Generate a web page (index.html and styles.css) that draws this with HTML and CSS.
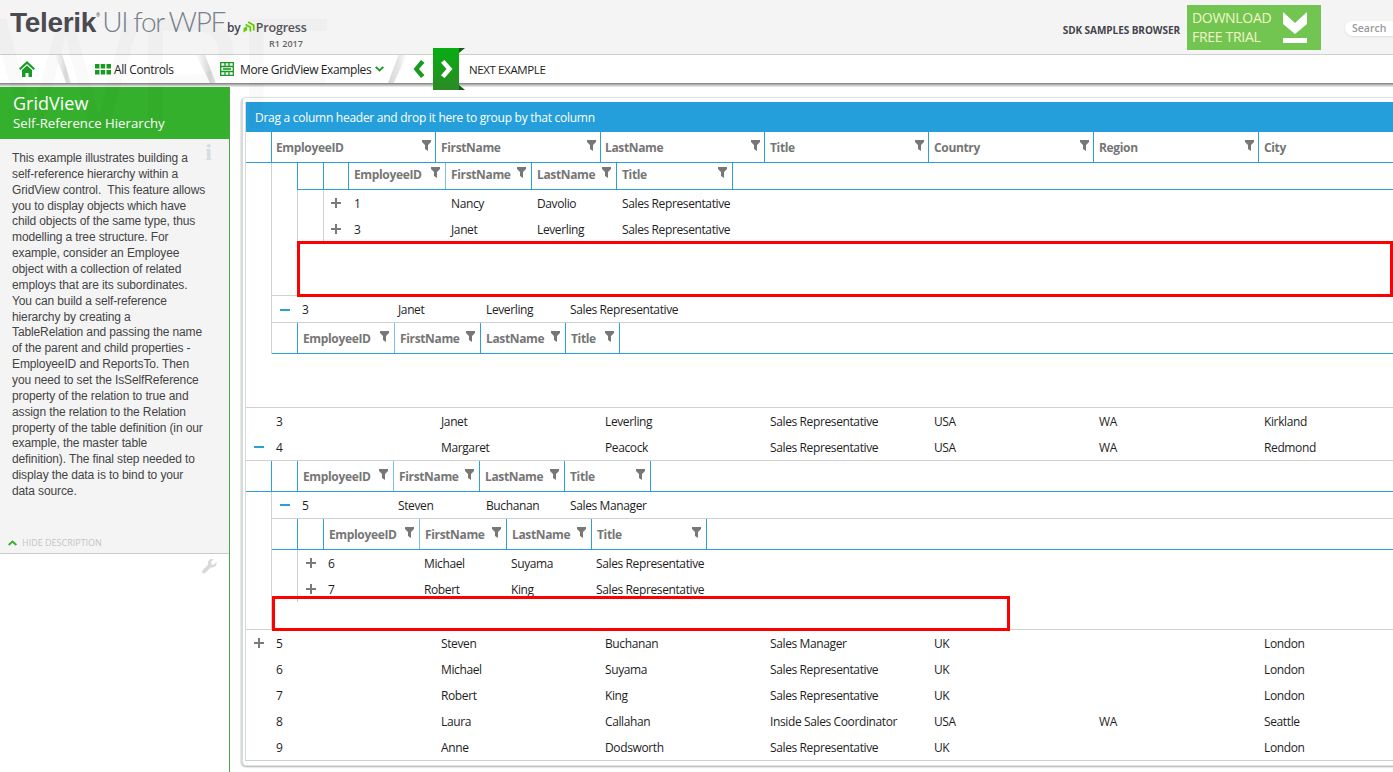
FILE: index.html
```html
<!DOCTYPE html>
<html lang="en">
<head>
<meta charset="utf-8">
<title>Telerik UI for WPF - GridView Self-Reference Hierarchy</title>
<link rel="stylesheet" href="styles.css">
</head>
<body>
<svg class="defs" width="0" height="0" aria-hidden="true">
  <symbol id="funnel" viewBox="0 0 9 11"><path d="M0 0h9v2L6 5v6L3 9V5L0 2z"/></symbol>
  <symbol id="plus" viewBox="0 0 10 10"><path d="M4 0h2v4h4v2H6v4H4V6H0V4h4z"/></symbol>
  <symbol id="minus" viewBox="0 0 10 10"><path d="M0 4h10v2H0z"/></symbol>
</svg>
<div class="page">
  <div class="watermark">WPF</div>
  <header class="top">
    <div class="logo">
      <div class="logo-line">
        <span class="telerik">Telerik</span><span class="reg">®</span><span class="ui">UI for WPF</span>
        <span class="by">by</span>
        <svg class="pg" viewBox="0 0 12 12"><path class="pg-core" d="M.5 11.500V7.200L4.200 5v4.300z"/><path class="pg-arc" d="M2.600 3.400L7.400 6.200V10.500M5 1L10.800 4.300V9.500"/></svg>
        <span class="prog">Progress</span>
      </div>
      <div class="ver">R1 2017</div>
    </div>
    <div class="top-right">
      <span class="sdk">SDK SAMPLES BROWSER</span>
      <div class="trial">
        <div class="trial-text">DOWNLOAD<br>FREE TRIAL</div>
        <svg class="dl" viewBox="0 0 24 32"><path fill="#fff" d="M0 0l12 11L24 0v12L12 22 0 12zM0 26h24v5H0z"/></svg>
      </div>
      <div class="search">Search</div>
    </div>
  </header>
  <nav class="nav">
    <svg class="home" viewBox="0 0 16 16"><path d="M8 0l8 7.500-1.400 1.400L8 3 1.400 8.900 0 7.500z"/><path d="M3 9l5-4.600L13 9v7H9.500v-4h-3v4H3z"/></svg>
    <i class="sep sep1"></i>
    <svg class="dots" viewBox="0 0 16 11"><path d="M0 0h4.500v4.500H0zM5.700 0h4.500v4.500H5.700zM11.500 0H16v4.500h-4.500zM0 6h4.500v4.500H0zM5.700 6h4.500v4.500H5.700zM11.500 6H16v4.500h-4.500z"/></svg>
    <span class="nav-text t-all">All Controls</span>
    <i class="sep sep2"></i>
    <svg class="tbl" viewBox="0 0 14 14"><path fill="none" stroke="#1a9a23" stroke-width="1.300" d="M.7.700h12.600v12.600H.7zM.7 4.500h12.600M.7 9.500h12.600M5 .7v3.800M9 .7v3.800M5 9.500v3.800M9 9.500v3.800"/><path fill="#1a9a23" d="M3 6.200h8v1.600H3z"/></svg>
    <span class="nav-text t-more">More GridView Examples</span>
    <svg class="chev" viewBox="0 0 10 6"><path d="M1.500 0L5 3.200 8.500 0 10 1.400 5 6 0 1.400z"/></svg>
    <i class="sep sep3"></i>
    <svg class="prev" viewBox="0 0 12 18"><path d="M8 0l3.500 2.800L6 9l5.500 6.200L8 18 .5 9z"/></svg>
    <div class="next-btn">
      <svg viewBox="0 0 13 18"><path d="M4.500 0L12.500 9l-8 9L1 15.200 6.500 9 1 2.800z"/></svg>
    </div>
    <span class="nav-text t-next">NEXT EXAMPLE</span>
  </nav>
  <div class="shade"></div>
  <main class="main">
    <aside class="side">
      <div class="side-head">
        <div class="side-title">GridView</div>
        <div class="side-sub">Self-Reference Hierarchy</div>
      </div>
      <div class="desc">
        <span class="info">i</span>
        <p>This example illustrates building a<br>self-reference hierarchy within a<br>GridView control.&nbsp; This feature allows<br>you to display objects which have<br>child objects of the same type, thus<br>modelling a tree structure. For<br>example, consider an Employee<br>object with a collection of related<br>employs that are its subordinates.<br>You can build a self-reference<br>hierarchy by creating a<br>TableRelation and passing the name<br>of the parent and child properties -<br>EmployeeID and ReportsTo. Then<br>you need to set the IsSelfReference<br>property of the relation to true and<br>assign the relation to the Relation<br>property of the table definition (in our<br>example, the master table<br>definition). The final step needed to<br>display the data is to bind to your<br>data source.</p>
        <div class="hide"><svg viewBox="0 0 10 6"><path d="M5 0l5 4.500L8.500 6 5 2.800 1.500 6 0 4.500z"/></svg><span>HIDE DESCRIPTION</span></div>
      </div>
      <div class="tools">
        <svg class="wrench" viewBox="0 0 16 16"><path d="M15.500 3.200L12.600 6 10 5.500 9.500 3 12.400.4C10.300-.4 8.300.2 7.200 1.500 6.100 2.800 6 4.500 6.500 6L.6 12c-.8.800-.8 2 0 2.900.8.800 2.100.8 2.900 0l6-6c1.500.5 3.200.3 4.500-.9 1.300-1.200 1.900-3.100 1.500-4.800z"/></svg>
      </div>
    </aside>
    <section class="content">
      <div class="card">
        <div class="grid">
          <div class="group-bar">Drag a column header and drop it here to group by that column</div>

          <div class="head main-cols">
            <div></div>
            <div class="hc id"><span>EmployeeID</span><svg class="fi"><use href="#funnel"/></svg></div>
            <div class="hc"><span>FirstName</span><svg class="fi"><use href="#funnel"/></svg></div>
            <div class="hc id"><span>LastName</span><svg class="fi"><use href="#funnel"/></svg></div>
            <div class="hc"><span>Title</span><svg class="fi"><use href="#funnel"/></svg></div>
            <div class="hc"><span>Country</span><svg class="fi"><use href="#funnel"/></svg></div>
            <div class="hc"><span>Region</span><svg class="fi"><use href="#funnel"/></svg></div>
            <div class="hc"><span>City</span></div>
          </div>

          <div class="detail">
            <div class="sub-a">
              <div class="head short a-cols">
                <div class="hc"></div>
                <div class="hc"></div>
                <div class="hc"><span>EmployeeID</span><svg class="fi"><use href="#funnel"/></svg></div>
                <div class="hc lt"><span>FirstName</span><svg class="fi"><use href="#funnel"/></svg></div>
                <div class="hc"><span>LastName</span><svg class="fi"><use href="#funnel"/></svg></div>
                <div class="hc"><span>Title</span><svg class="fi"><use href="#funnel"/></svg></div>
                <div class="hc"></div>
              </div>
              <div class="row a-cols">
                <div class="rule"></div>
                <div class="rule tg"><svg class="ic plus"><use href="#plus"/></svg></div>
                <div class="c">1</div><div class="c">Nancy</div><div class="c">Davolio</div><div class="c">Sales Representative</div>
              </div>
              <div class="row a-cols">
                <div class="rule"></div>
                <div class="rule tg"><svg class="ic plus"><use href="#plus"/></svg></div>
                <div class="c">3</div><div class="c">Janet</div><div class="c">Leverling</div><div class="c">Sales Representative</div>
              </div>
            </div>
            <div class="row thin br-cols line">
              <div class="tg"><svg class="ic minus"><use href="#minus"/></svg></div>
              <div class="c5">3</div><div class="c5">Janet</div><div class="c5">Leverling</div><div class="c5">Sales Representative</div>
            </div>
            <div class="head b-cols">
              <div></div>
              <div class="hc"><span>EmployeeID</span><svg class="fi"><use href="#funnel"/></svg></div>
              <div class="hc lt"><span>FirstName</span><svg class="fi"><use href="#funnel"/></svg></div>
              <div class="hc"><span>LastName</span><svg class="fi"><use href="#funnel"/></svg></div>
              <div class="hc"><span>Title</span><svg class="fi"><use href="#funnel"/></svg></div>
              <div class="hc"></div>
            </div>
          </div>
          <div class="gap"></div>

          <div class="row main-cols">
            <div class="tg"></div><div class="c id">3</div><div class="c">Janet</div><div class="c id">Leverling</div><div class="c">Sales Representative</div><div class="c">USA</div><div class="c">WA</div><div class="c">Kirkland</div>
          </div>
          <div class="row main-cols line">
            <div class="tg"><svg class="ic minus"><use href="#minus"/></svg></div><div class="c id">4</div><div class="c">Margaret</div><div class="c id">Peacock</div><div class="c">Sales Representative</div><div class="c">USA</div><div class="c">WA</div><div class="c">Redmond</div>
          </div>
          <div class="head c-cols">
            <div></div>
            <div class="hc"></div>
            <div class="hc"><span>EmployeeID</span><svg class="fi"><use href="#funnel"/></svg></div>
            <div class="hc lt"><span>FirstName</span><svg class="fi"><use href="#funnel"/></svg></div>
            <div class="hc"><span>LastName</span><svg class="fi"><use href="#funnel"/></svg></div>
            <div class="hc"><span>Title</span><svg class="fi"><use href="#funnel"/></svg></div>
            <div class="hc"></div>
          </div>

          <div class="section-end">
            <div class="detail tall">
              <div class="row br-cols line">
                <div class="tg"><svg class="ic minus"><use href="#minus"/></svg></div>
                <div class="c5">5</div><div class="c5">Steven</div><div class="c5">Buchanan</div><div class="c5">Sales Manager</div>
              </div>
              <div class="head d-cols">
                <div></div>
                <div class="hc"></div>
                <div class="hc"><span>EmployeeID</span><svg class="fi"><use href="#funnel"/></svg></div>
                <div class="hc lt"><span>FirstName</span><svg class="fi"><use href="#funnel"/></svg></div>
                <div class="hc"><span>LastName</span><svg class="fi"><use href="#funnel"/></svg></div>
                <div class="hc"><span>Title</span><svg class="fi"><use href="#funnel"/></svg></div>
                <div class="hc"></div>
              </div>
              <div class="row d-cols">
                <div></div>
                <div class="rule tg"><svg class="ic plus"><use href="#plus"/></svg></div>
                <div class="c">6</div><div class="c">Michael</div><div class="c">Suyama</div><div class="c">Sales Representative</div>
              </div>
              <div class="row d-cols">
                <div></div>
                <div class="rule tg"><svg class="ic plus"><use href="#plus"/></svg></div>
                <div class="c">7</div><div class="c">Robert</div><div class="c">King</div><div class="c">Sales Representative</div>
              </div>
            </div>
          </div>

          <div class="row main-cols">
            <div class="tg"><svg class="ic plus"><use href="#plus"/></svg></div><div class="c id">5</div><div class="c">Steven</div><div class="c id">Buchanan</div><div class="c">Sales Manager</div><div class="c">UK</div><div class="c"></div><div class="c">London</div>
          </div>
          <div class="row main-cols">
            <div class="tg"></div><div class="c id">6</div><div class="c">Michael</div><div class="c id">Suyama</div><div class="c">Sales Representative</div><div class="c">UK</div><div class="c"></div><div class="c">London</div>
          </div>
          <div class="row main-cols">
            <div class="tg"></div><div class="c id">7</div><div class="c">Robert</div><div class="c id">King</div><div class="c">Sales Representative</div><div class="c">UK</div><div class="c"></div><div class="c">London</div>
          </div>
          <div class="row main-cols">
            <div class="tg"></div><div class="c id">8</div><div class="c">Laura</div><div class="c id">Callahan</div><div class="c">Inside Sales Coordinator</div><div class="c">USA</div><div class="c">WA</div><div class="c">Seattle</div>
          </div>
          <div class="row main-cols">
            <div class="tg"></div><div class="c id">9</div><div class="c">Anne</div><div class="c id">Dodsworth</div><div class="c">Sales Representative</div><div class="c">UK</div><div class="c"></div><div class="c">London</div>
          </div>

          <div class="mark mark-a"></div>
          <div class="mark mark-b"></div>
        </div>
      </div>
    </section>
  </main>
</div>
</body>
</html>
```
FILE: styles.css
```css
* { box-sizing: border-box; }
html, body { margin: 0; height: 100%; overflow: hidden; background: #fff; }
body { font-family: "Open Sans", "Noto Sans", sans-serif; font-size: 12px; letter-spacing: -.38px; color: #1e1e1e; }
.defs { position: absolute; }
.page { position: relative; width: 1393px; height: 772px; overflow: hidden; display: flex; flex-direction: column; }

.watermark { position: absolute; left: -10px; top: -6px; font: 400 160px/1 "Liberation Sans", sans-serif; letter-spacing: -6px; color: rgba(0,0,0,.02); pointer-events: none; z-index: 5; }

/* top bar */
.top { height: 55px; flex: none; background: #f4f4f4; border-bottom: 1px solid #cfcfcf; display: flex; justify-content: space-between; letter-spacing: 0; }
.logo { padding: 6px 0 0 10px; }
.logo-line { display: flex; align-items: baseline; height: 31px; white-space: nowrap; }
.telerik { font: 700 28px/31px "Liberation Sans", sans-serif; color: #4a4a50; letter-spacing: -.3px; }
.reg { font-size: 5px; color: #4a4a50; margin-right: 2px; align-self: flex-start; padding-top: 6px; }
.ui { font: 300 28px/31px "Lato", sans-serif; color: #78828c; letter-spacing: -1.4px; }
.by { font: 600 12px "Open Sans", sans-serif; color: #45454b; margin-left: 2px; }
.pg { width: 12px; height: 12px; margin: 0 1px 0 2px; align-self: center; position: relative; top: 5px; }
.pg-core { fill: #5fd000; }
.pg-arc { fill: none; stroke: #5fd000; stroke-width: 1.700; }
.prog { font: 600 12.500px "Open Sans", sans-serif; color: #55555b; letter-spacing: -.2px; }
.ver { font: 600 9px/12px "Open Sans", sans-serif; color: #666; margin: 1px 0 0 259px; }

.top-right { display: flex; align-items: flex-start; }
.sdk { font: 700 10px/14px "Open Sans", sans-serif; letter-spacing: -.05px; color: #44444c; margin: 23px 7px 0 0; }
.trial { width: 134px; height: 45px; margin-top: 5px; background: #72c551; display: flex; padding: 3px 14px 0 5px; justify-content: space-between; }
.trial-text { font: 400 14px/19px "Open Sans", sans-serif; letter-spacing: -.3px; color: #f3f6c9; }
.dl { width: 24px; height: 32px; margin-top: 4px; }
.search { width: 48px; height: 15px; margin: 21px 0 0 24px; background: #fff; border-radius: 8px 0 0 8px; box-shadow: 0 1px 2px #ddd; font: 600 10.500px/15px "Open Sans", sans-serif; color: #9a9a9a; padding-left: 7px; }

/* nav */
.nav { height: 28px; flex: none; background: #fff; display: flex; align-items: center; position: relative; z-index: 2; }
.nav-text { font-size: 12px; white-space: nowrap; padding-top: 1px; }
.home { width: 16px; height: 16px; margin-left: 19px; fill: #1a9a23; }
.sep { width: 16px; height: 28px; display: block; flex: none; background: linear-gradient(90deg, #fff, #d6d6d6 70%, #e8e8e8); }
.sep1 { margin-left: 20px; clip-path: polygon(0 0, 45% 0, 100% 100%, 70% 100%); }
.dots { width: 16px; height: 11px; margin-left: 24px; fill: #1a9a23; }
.t-all { margin-left: 3px; width: 61px; }
.sep2 { margin-left: 21px; width: 20px; clip-path: polygon(0 0, 45% 0, 100% 100%, 70% 100%); }
.tbl { width: 14px; height: 14px; margin-left: 4px; }
.t-more { margin-left: 6px; width: 131px; }
.chev { width: 9px; height: 6px; margin-left: 4px; fill: #1a9a23; }
.sep3 { margin-left: 4px; width: 19px; clip-path: polygon(55% 0, 100% 0, 30% 100%, 0 100%); background: linear-gradient(90deg, #d6d6d6, #e8e8e8 60%, #fff); }
.prev { width: 12px; height: 18px; margin-left: 6px; fill: #1a9a23; }
.next-btn { width: 26px; height: 42px; margin-left: 8px; flex: none; position: relative; background: linear-gradient(#07ad13, #2b8a24); display: flex; align-items: center; justify-content: center; }
.next-btn svg { width: 13px; height: 18px; fill: #fff; }
.next-btn::before, .next-btn::after { content: ""; position: absolute; left: 100%; width: 0; height: 0; border-left: 6px solid #125f18; }
.next-btn::before { top: 0; border-bottom: 5px solid transparent; }
.next-btn::after { bottom: 0; border-top: 5px solid transparent; }
.t-next { margin-left: 10px; font-size: 11.500px; }

.shade { height: 4px; flex: none; background: linear-gradient(#7c7c7c, #bdbdbd 50%, #f2f2f2); }

/* main */
.main { flex: 1; display: flex; min-height: 0; }
.side { width: 230px; flex: none; border-right: 1px solid #4aa84a; display: flex; flex-direction: column; position: relative; z-index: 1; letter-spacing: 0; }
.side-head { height: 52px; background: #35b02c; color: #fff; padding: 4px 0 0 13px; }
.side-title { font: 400 18px/24px "Open Sans", sans-serif; }
.side-sub { font: 400 13.200px/17px "Open Sans", sans-serif; }
.desc { height: 415px; background: #f4f4f4; border-bottom: 1px solid #c5cccc; position: relative; padding: 12px 0 0 12px; }
.desc p { margin: 0; font: 400 12px/15.860px "Liberation Sans", sans-serif; letter-spacing: -.12px; color: #444; white-space: nowrap; }
.info { position: absolute; right: 17px; top: 2px; font: 700 24px/22px "Liberation Serif", serif; color: #d6dddd; }
.hide { position: absolute; left: 8px; bottom: 4px; display: flex; align-items: center; gap: 5px; font-size: 9px; line-height: 12px; color: #c4c4c4; }
.hide svg { width: 9px; height: 6px; fill: #35b02c; }
.tools { display: flex; justify-content: flex-end; padding: 5px 12px 0 0; }
.wrench { width: 15px; height: 15px; fill: #d6dada; }

/* card */
.content { flex: 1; min-width: 0; padding: 10px 0 6px 11px; }
.card { height: 669px; margin-right: -12px; background: #fff; border: 1px solid #dfe3e3; border-left: 2px solid #d5dadc; border-radius: 5px; box-shadow: 0 1px 2px #a8acae; padding: 4px 0 0 2px; }
.grid { position: relative; height: 659px; border-left: 1px solid #d8d8d8; border-bottom: 1px solid #d0d0d0; overflow: hidden; }
.group-bar { height: 30px; background: #259fdb; color: #fff; font-size: 12px; letter-spacing: -.27px; line-height: 32px; padding-left: 10px; margin-left: -1px; }

.main-cols { display: grid; grid-template-columns: 25px 164px 165px 164px 164px 165px 165px 164px; }
.a-cols { display: grid; grid-template-columns: 26px 25px 97px 86px 85px 116px 1fr; }
.b-cols { display: grid; grid-template-columns: 25px 97px 86px 85px 54px 1fr; }
.br-cols { display: grid; grid-template-columns: 25px 96px 88px 84px 1fr; }
.c-cols { display: grid; grid-template-columns: 25px 26px 96px 86px 85px 86px 1fr; }
.d-cols { display: grid; grid-template-columns: 25px 26px 96px 87px 85px 115px 1fr; }

.head { height: 31px; border-bottom: 1px solid #2a9fd8; }
.head.short { height: 27px; }
.head.short .hc { padding-bottom: 4px; }
.hc { border-left: 1px solid #2a9fd8; padding: 0 5px 0 5px; display: flex; align-items: center; justify-content: space-between; font-weight: 700; letter-spacing: -.35px; color: #767676; white-space: nowrap; overflow: hidden; }
.main-cols .hc { padding-right: 4px; }
.hc.lt { border-left-color: #7cc1e8; }
.main-cols .hc.id { padding-left: 4px; }
.fi { width: 9px; height: 11px; fill: #777; flex: none; margin-top: -3px; }

.row { height: 26px; align-items: center; white-space: nowrap; }
.row.line { height: 27px; border-bottom: 1px solid #d0d0d0; }
.row.thin { padding-top: 1px; }
.c { padding-left: 6px; }
.c.id { padding-left: 5px; }
.d-cols .c { padding-left: 5px; }
.c5 { padding-left: 5px; }
.tg { display: flex; align-items: center; justify-content: center; height: 100%; }
.rule { border-left: 1px solid #d0d0d0; height: 100%; }
.ic { width: 10px; height: 10px; flex: none; }
.plus { fill: #7a7a7a; }
.minus { fill: #2a9fd8; }

.detail { margin-left: 25px; border-left: 1px solid #d0d0d0; }
.sub-a { height: 133px; padding-left: 25px; border-bottom: 1px solid #d0d0d0; }
.gap { height: 54px; border-bottom: 1px solid #d0d0d0; }
.section-end { height: 138px; border-bottom: 1px solid #d0d0d0; }
.detail.tall { height: 137px; }

.mark { position: absolute; border: 3px solid #f00; pointer-events: none; }
.mark-a { left: 51px; top: 139px; width: 1096px; height: 56px; }
.mark-b { left: 26px; top: 494px; width: 738px; height: 35px; }
```
